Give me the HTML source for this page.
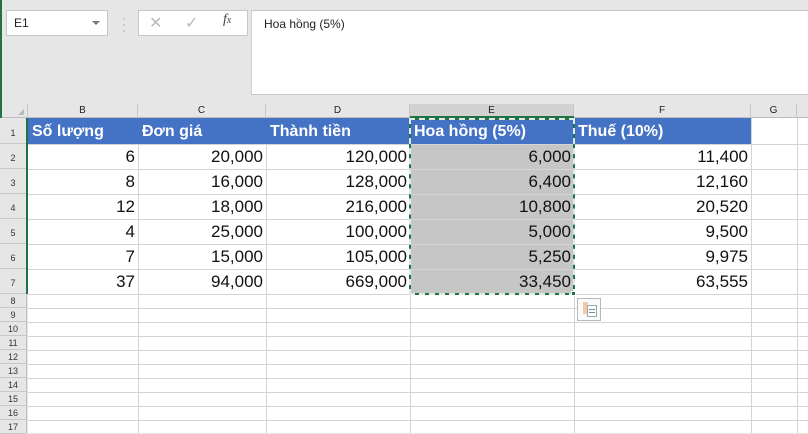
<!DOCTYPE html>
<html><head><meta charset="utf-8"><style>
*{margin:0;padding:0;box-sizing:border-box}
body{width:808px;height:433px;overflow:hidden;background:#e6e6e6;position:relative;font-family:"Liberation Sans",sans-serif}
.a{position:absolute}
.hl{position:absolute;height:1px;background:#d4d4d4}
.vl{position:absolute;width:1px;background:#d4d4d4}
.ch{position:absolute;top:104px;height:14px;font-size:10px;color:#222;text-align:center;line-height:14px;border-right:1px solid #c6c6c6}
.rh{position:absolute;left:0;width:26px;font-size:9px;color:#333;text-align:center;background:#e6e6e6;border-bottom:1px solid #c8c8c8}
.h{position:absolute;top:118px;height:26px;background:#4472c4;color:#fff;font-weight:bold;font-size:16px;line-height:27px;padding-left:4px;white-space:nowrap}
.n{position:absolute;height:25px;font-size:17px;line-height:26px;text-align:right;padding-right:3px;color:#111}
</style></head><body>
<div class="a" style="left:0;top:0;width:2px;height:433px;background:#217346"></div>
<!-- name box -->
<div class="a" style="left:6px;top:10px;width:102px;height:26px;background:#fff;border:1px solid #c6c6c6;font-size:12px;line-height:24px;padding-left:7px;color:#222">E1</div>
<div class="a" style="left:92px;top:21px;width:0;height:0;border-left:4px solid transparent;border-right:4px solid transparent;border-top:4px solid #777"></div>
<div class="a" style="left:122px;top:15px;color:#999;font-size:12px;line-height:6px">·<br>·<br>·</div>
<div class="a" style="left:138px;top:10px;width:110px;height:26px;background:#fff;border:1px solid #c6c6c6"></div>
<div class="a" style="left:149px;top:13px;color:#bbb;font-size:16px">✕</div>
<div class="a" style="left:185px;top:13px;color:#bbb;font-size:16px">✓</div>
<div class="a" style="left:223px;top:12px;color:#444;font-size:14px;font-style:italic;font-family:'Liberation Serif',serif">f<span style="font-size:10px">x</span></div>
<div class="a" style="left:251px;top:10px;width:557px;height:85px;background:#fff;border-top:1px solid #c6c6c6;border-bottom:1px solid #c6c6c6;border-left:1px solid #d0d0d0;font-size:12px;padding:6px 12px;color:#222">Hoa hồng (5%)</div>
<!-- sheet -->
<div class="a" style="left:2px;top:96px;width:806px;height:337px;background:#fff"></div>
<div class="a" style="left:2px;top:96px;width:806px;height:22px;background:#e6e6e6;border-bottom:1px solid #bcbcbc"></div>
<div class="a" style="left:18px;top:109px;width:0;height:0;border-left:6px solid transparent;border-bottom:6px solid #b8b8b8"></div>
<div class="ch" style="left:27px;width:111px;border-left:1px solid #c6c6c6">B</div>
<div class="ch" style="left:138px;width:128px">C</div>
<div class="ch" style="left:266px;width:144px">D</div>
<div class="ch" style="left:410px;width:164px;background:#d2d2d2;top:104px">E</div>
<div class="ch" style="left:574px;width:177px">F</div>
<div class="ch" style="left:751px;width:46px">G</div>
<div class="a" style="left:410px;top:116px;width:164px;height:2px;background:#217346"></div>
<!-- row headers -->
<div class="a" style="left:0;top:118px;width:28px;height:315px;background:#e6e6e6"></div>
<div class="rh" style="top:118px;height:26px;line-height:30px">1</div>
<div class="rh" style="top:144px;height:25px;line-height:28px">2</div>
<div class="rh" style="top:169px;height:25px;line-height:28px">3</div>
<div class="rh" style="top:194px;height:25px;line-height:28px">4</div>
<div class="rh" style="top:219px;height:25px;line-height:28px">5</div>
<div class="rh" style="top:244px;height:25px;line-height:28px">6</div>
<div class="rh" style="top:269px;height:25px;line-height:28px">7</div>
<div class="rh" style="top:294px;height:14px;line-height:14px">8</div>
<div class="rh" style="top:308px;height:14px;line-height:14px">9</div>
<div class="rh" style="top:322px;height:14px;line-height:14px">10</div>
<div class="rh" style="top:336px;height:14px;line-height:14px">11</div>
<div class="rh" style="top:350px;height:14px;line-height:14px">12</div>
<div class="rh" style="top:364px;height:14px;line-height:14px">13</div>
<div class="rh" style="top:378px;height:14px;line-height:14px">14</div>
<div class="rh" style="top:392px;height:14px;line-height:14px">15</div>
<div class="rh" style="top:406px;height:14px;line-height:14px">16</div>
<div class="rh" style="top:420px;height:14px;line-height:14px">17</div>
<div class="a" style="left:26px;top:118px;width:2px;height:176px;background:#217346"></div>
<div class="a" style="left:26px;top:294px;width:1px;height:139px;background:#c0c0c0"></div>
<!-- E selection grey -->
<div class="a" style="left:410px;top:144px;width:164px;height:150px;background:#c6c6c6"></div>
<!-- grid horizontal -->
<div class="hl" style="left:28px;top:144px;width:780px"></div>
<div class="hl" style="left:28px;top:169px;width:780px"></div>
<div class="hl" style="left:28px;top:194px;width:780px"></div>
<div class="hl" style="left:28px;top:219px;width:780px"></div>
<div class="hl" style="left:28px;top:244px;width:780px"></div>
<div class="hl" style="left:28px;top:269px;width:780px"></div>
<div class="hl" style="left:28px;top:294px;width:780px"></div>
<div class="hl" style="left:28px;top:308px;width:780px"></div>
<div class="hl" style="left:28px;top:322px;width:780px"></div>
<div class="hl" style="left:28px;top:336px;width:780px"></div>
<div class="hl" style="left:28px;top:350px;width:780px"></div>
<div class="hl" style="left:28px;top:364px;width:780px"></div>
<div class="hl" style="left:28px;top:378px;width:780px"></div>
<div class="hl" style="left:28px;top:392px;width:780px"></div>
<div class="hl" style="left:28px;top:406px;width:780px"></div>
<div class="hl" style="left:28px;top:420px;width:780px"></div>
<!-- grid vertical -->
<div class="vl" style="left:138px;top:118px;height:315px"></div>
<div class="vl" style="left:266px;top:118px;height:315px"></div>
<div class="vl" style="left:410px;top:118px;height:315px"></div>
<div class="vl" style="left:574px;top:118px;height:315px"></div>
<div class="vl" style="left:751px;top:118px;height:315px"></div>
<div class="vl" style="left:797px;top:118px;height:315px"></div>
<!-- header row -->
<div class="h" style="left:28px;width:110px">Số lượng</div>
<div class="h" style="left:138px;width:128px">Đơn giá</div>
<div class="h" style="left:266px;width:144px">Thành tiền</div>
<div class="h" style="left:410px;width:164px">Hoa hồng (5%)</div>
<div class="h" style="left:574px;width:177px">Thuế (10%)</div>
<!-- data -->
<div class="n" style="left:28px;width:110px;top:144px">6</div><div class="n" style="left:138px;width:128px;top:144px">20,000</div><div class="n" style="left:266px;width:144px;top:144px">120,000</div><div class="n" style="left:410px;width:164px;top:144px">6,000</div><div class="n" style="left:574px;width:177px;top:144px">11,400</div>
<div class="n" style="left:28px;width:110px;top:169px">8</div><div class="n" style="left:138px;width:128px;top:169px">16,000</div><div class="n" style="left:266px;width:144px;top:169px">128,000</div><div class="n" style="left:410px;width:164px;top:169px">6,400</div><div class="n" style="left:574px;width:177px;top:169px">12,160</div>
<div class="n" style="left:28px;width:110px;top:194px">12</div><div class="n" style="left:138px;width:128px;top:194px">18,000</div><div class="n" style="left:266px;width:144px;top:194px">216,000</div><div class="n" style="left:410px;width:164px;top:194px">10,800</div><div class="n" style="left:574px;width:177px;top:194px">20,520</div>
<div class="n" style="left:28px;width:110px;top:219px">4</div><div class="n" style="left:138px;width:128px;top:219px">25,000</div><div class="n" style="left:266px;width:144px;top:219px">100,000</div><div class="n" style="left:410px;width:164px;top:219px">5,000</div><div class="n" style="left:574px;width:177px;top:219px">9,500</div>
<div class="n" style="left:28px;width:110px;top:244px">7</div><div class="n" style="left:138px;width:128px;top:244px">15,000</div><div class="n" style="left:266px;width:144px;top:244px">105,000</div><div class="n" style="left:410px;width:164px;top:244px">5,250</div><div class="n" style="left:574px;width:177px;top:244px">9,975</div>
<div class="n" style="left:28px;width:110px;top:269px">37</div><div class="n" style="left:138px;width:128px;top:269px">94,000</div><div class="n" style="left:266px;width:144px;top:269px">669,000</div><div class="n" style="left:410px;width:164px;top:269px">33,450</div><div class="n" style="left:574px;width:177px;top:269px">63,555</div>
<!-- marching ants -->
<div class="a" style="left:409px;top:118px;width:166px;height:177px;border:2px solid #217346"></div>
<div class="a" style="left:409px;top:118px;width:166px;height:177px;border:2px dashed #fff;opacity:.85"></div>
<div class="a" style="left:571px;top:291px;width:5px;height:5px;background:#217346;border:1px solid #fff"></div>
<!-- paste options -->
<div class="a" style="left:577px;top:298px;width:24px;height:23px;border:1px solid #b8b8b8;background:#fafafa"></div>
<div class="a" style="left:583px;top:302px;width:5px;height:12px;background:#f2c9a8"></div>
<div class="a" style="left:587px;top:305px;width:10px;height:12px;background:#fff;border:1px solid #9aa"></div>
<div class="a" style="left:589px;top:309px;width:6px;height:1px;background:#6a8fb0"></div>
<div class="a" style="left:589px;top:312px;width:6px;height:1px;background:#6a8fb0"></div>
</body></html>
